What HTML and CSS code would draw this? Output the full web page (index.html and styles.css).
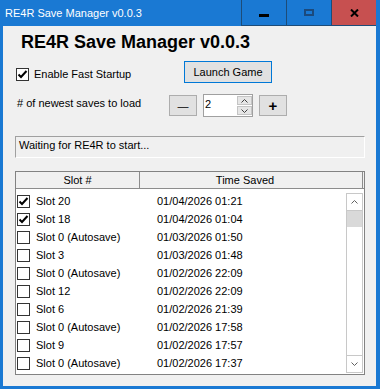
FILE: index.html
```html
<!DOCTYPE html>
<html lang="en">
<head>
    <meta charset="UTF-8">
    <meta name="viewport" content="width=device-width, initial-scale=1.0">
    <title>RE4R Save Manager v0.0.3</title>
    <link rel="stylesheet" href="styles.css">
</head>
<body>
    <div class="window">
        <div class="titlebar">
            <span class="title">RE4R Save Manager v0.0.3</span>
            <div class="caption-buttons">
                <span class="cap-btn min"><span class="min-glyph"></span></span>
                <span class="cap-btn max"><span class="max-glyph"></span></span>
                <span class="cap-btn close">
                    <svg width="9" height="8" viewBox="0 0 9 8"><path d="M1 0.5 L8 7.5 M8 0.5 L1 7.5" stroke="#000" stroke-width="2" fill="none"/></svg>
                </span>
            </div>
        </div>

        <div class="content">
            <h1>RE4R Save Manager v0.0.3</h1>

            <div class="row-top">
                <label class="check-label">
                    <span class="check"><svg width="11" height="11" viewBox="0 0 11 11"><path d="M1.5 5.5 L4 8 L9.5 2" stroke="#000" stroke-width="2" fill="none"/></svg></span>
                    Enable Fast Startup
                </label>
                <button class="launch">Launch Game</button>
            </div>

            <div class="row-count">
                <span class="count-label"># of newest saves to load</span>
                <button class="step minus">—</button>
                <div class="numeric">
                    <span class="num-value">2</span>
                    <div class="spin">
                        <span class="spin-btn"><svg width="7" height="4" viewBox="0 0 7 4"><path d="M0.5 3.5 L3.5 0.5 L6.5 3.5" stroke="#404040" fill="none"/></svg></span>
                        <span class="spin-btn"><svg width="7" height="4" viewBox="0 0 7 4"><path d="M0.5 0.5 L3.5 3.5 L6.5 0.5" stroke="#404040" fill="none"/></svg></span>
                    </div>
                </div>
                <button class="step plus">+</button>
            </div>

            <div class="status">Waiting for RE4R to start...</div>

            <div class="listview">
                <div class="lv-header">
                    <div class="col-slot">Slot #</div>
                    <div class="col-time">Time Saved</div>
                </div>
                <div class="lv-body">
                    <div class="lv-rows">
                        <div class="lv-row">
                            <span class="slot"><span class="check"><svg width="11" height="11" viewBox="0 0 11 11"><path d="M1.5 5.5 L4 8 L9.5 2" stroke="#000" stroke-width="2" fill="none"/></svg></span>Slot 20</span>
                            <span class="time">01/04/2026 01:21</span>
                        </div>
                        <div class="lv-row">
                            <span class="slot"><span class="check"><svg width="11" height="11" viewBox="0 0 11 11"><path d="M1.5 5.5 L4 8 L9.5 2" stroke="#000" stroke-width="2" fill="none"/></svg></span>Slot 18</span>
                            <span class="time">01/04/2026 01:04</span>
                        </div>
                        <div class="lv-row">
                            <span class="slot"><span class="check"></span>Slot 0 (Autosave)</span>
                            <span class="time">01/03/2026 01:50</span>
                        </div>
                        <div class="lv-row">
                            <span class="slot"><span class="check"></span>Slot 3</span>
                            <span class="time">01/03/2026 01:48</span>
                        </div>
                        <div class="lv-row">
                            <span class="slot"><span class="check"></span>Slot 0 (Autosave)</span>
                            <span class="time">01/02/2026 22:09</span>
                        </div>
                        <div class="lv-row">
                            <span class="slot"><span class="check"></span>Slot 12</span>
                            <span class="time">01/02/2026 22:09</span>
                        </div>
                        <div class="lv-row">
                            <span class="slot"><span class="check"></span>Slot 6</span>
                            <span class="time">01/02/2026 21:39</span>
                        </div>
                        <div class="lv-row">
                            <span class="slot"><span class="check"></span>Slot 0 (Autosave)</span>
                            <span class="time">01/02/2026 17:58</span>
                        </div>
                        <div class="lv-row">
                            <span class="slot"><span class="check"></span>Slot 9</span>
                            <span class="time">01/02/2026 17:57</span>
                        </div>
                        <div class="lv-row">
                            <span class="slot"><span class="check"></span>Slot 0 (Autosave)</span>
                            <span class="time">01/02/2026 17:37</span>
                        </div>
                    </div>
                    <div class="scrollbar">
                        <span class="sb-up"><svg width="7" height="4" viewBox="0 0 7 4"><path d="M0.5 3.5 L3.5 0.5 L6.5 3.5" stroke="#606060" fill="none"/></svg></span>
                        <span class="sb-thumb"></span>
                        <span class="sb-track"></span>
                        <span class="sb-down"><svg width="7" height="4" viewBox="0 0 7 4"><path d="M0.5 0.5 L3.5 3.5 L6.5 0.5" stroke="#606060" fill="none"/></svg></span>
                    </div>
                </div>
            </div>
        </div>
    </div>
</body>
</html>
```

FILE: styles.css
```css
body {
    margin: 0;
    background-color: #1a79d3;
    font-family: "Liberation Sans", Arial, sans-serif;
    font-size: 11px;
    color: #000;
}
.window {
    width: 380px;
    height: 389px;
    display: flex;
    flex-direction: column;
}

/* title bar */
.titlebar {
    height: 26px;
    display: flex;
    color: #fff;
}
.title {
    flex: 1;
    padding: 7px 0 0 5px;
    line-height: 13px;
}
.caption-buttons {
    display: flex;
    margin-right: 4px;
}
.cap-btn {
    width: 45px;
    height: 25px;
    border-left: 1px solid #1d4c78;
    border-bottom: 1px solid #1d4c78;
    display: flex;
    justify-content: center;
    align-items: flex-start;
}
.cap-btn.min {
    padding-top: 14px;
    box-sizing: border-box;
    height: 26px;
}
.min-glyph {
    width: 10px;
    height: 3px;
    background-color: #000;
}
.cap-btn.max {
    padding-top: 9px;
    box-sizing: border-box;
    height: 26px;
}
.max-glyph {
    width: 10px;
    height: 7px;
    box-sizing: border-box;
    border: 2px solid #1b4a7d;
}
.cap-btn.close {
    background-color: #c75050;
    padding-top: 9px;
    box-sizing: border-box;
    height: 26px;
}

/* main area */
.content {
    flex: 1;
    margin: 0 4px 3px 3px;
    padding: 0 11px 0 12px;
    background-color: #f0f0f0;
}
h1 {
    margin: 5px 0 0 6px;
    font-size: 18px;
    line-height: 22px;
    font-weight: bold;
}
.row-top {
    margin-top: 8px;
    display: flex;
    align-items: flex-start;
}
.check-label {
    width: 168px;
    padding-left: 1px;
    margin-top: 7px;
    display: flex;
    align-items: center;
    line-height: 13px;
}
.check {
    width: 13px;
    height: 13px;
    box-sizing: border-box;
    border: 1px solid #333;
    background-color: #fff;
    display: flex;
    flex-shrink: 0;
}
.check-label .check {
    margin-right: 5px;
}
.launch {
    width: 88px;
    height: 22px;
    padding: 0;
    border: 1px solid #0078d7;
    background-color: #e1e1e1;
    font-family: inherit;
    font-size: 11px;
}
.row-count {
    margin-top: 11px;
    display: flex;
    align-items: flex-start;
}
.count-label {
    width: 152px;
    padding-left: 2px;
    margin-top: 3px;
    line-height: 13px;
}
.step {
    width: 28px;
    height: 21px;
    margin-top: 1px;
    padding: 0;
    border: 1px solid #adadad;
    background-color: #e1e1e1;
    font-family: inherit;
}
.minus {
    font-size: 11px;
}
.plus {
    margin-left: 6px;
    font-size: 15px;
    font-weight: bold;
    line-height: 15px;
}
.numeric {
    width: 50px;
    height: 23px;
    margin-left: 6px;
    box-sizing: border-box;
    border: 1px solid #a0a0a0;
    background-color: #fff;
    display: flex;
}
.num-value {
    padding: 3px 0 0 1px;
    line-height: 13px;
}
.spin {
    margin: 1px 0 0 auto;
    width: 15px;
    display: flex;
    flex-direction: column;
    gap: 1px;
}
.spin-btn {
    height: 9px;
    box-sizing: border-box;
    border: 1px solid #c4c4c4;
    background-color: #e6e6e6;
    display: flex;
    justify-content: center;
    align-items: center;
}
.status {
    margin-top: 19px;
    height: 22px;
    box-sizing: border-box;
    padding: 2px 3px;
    line-height: 13px;
    border-top: 1px solid #a0a0a0;
    border-left: 1px solid #a0a0a0;
    border-right: 1px solid #fff;
    border-bottom: 1px solid #fff;
}

/* list */
.listview {
    margin-top: 13px;
    height: 204px;
    box-sizing: border-box;
    border: 1px solid #828282;
    background-color: #fff;
    display: flex;
    flex-direction: column;
}
.lv-header {
    height: 17px;
    display: flex;
    background-color: #f0f0f0;
    border-bottom: 1px solid #8c8c8c;
    box-sizing: border-box;
    line-height: 16px;
    padding-right: 1px;
}
.col-slot {
    width: 123px;
    border-right: 1px solid #8c8c8c;
    text-align: center;
}
.col-time {
    flex: 1;
    border-right: 1px solid #8c8c8c;
    padding-right: 12px;
    text-align: center;
}
.lv-body {
    flex: 1;
    display: flex;
}
.lv-rows {
    flex: 1;
    padding-top: 3px;
}
.lv-row {
    height: 18px;
    display: flex;
    align-items: center;
    line-height: 18px;
}
.slot {
    width: 141px;
    display: flex;
    align-items: center;
}
.slot .check {
    margin: 0 6px 0 1px;
}
.scrollbar {
    width: 17px;
    margin: 4px 1px 1px 0;
    box-sizing: border-box;
    border: 1px solid #c8c8c8;
    display: flex;
    flex-direction: column;
}
.sb-up, .sb-down {
    height: 16px;
    display: flex;
    justify-content: center;
    align-items: center;
}
.sb-up {
    border-bottom: 1px solid #c8c8c8;
}
.sb-down {
    border-top: 1px solid #c8c8c8;
}
.sb-thumb {
    height: 16px;
    background-color: #d9d9d9;
}
.sb-track {
    flex: 1;
}
```
